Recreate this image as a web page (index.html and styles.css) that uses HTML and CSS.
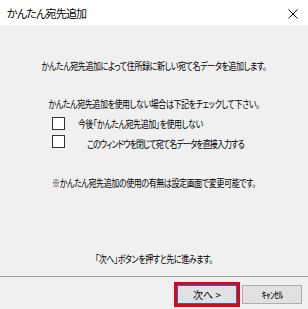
FILE: index.html
```html
<!DOCTYPE html>
<html lang="ja">
<head>
  <meta charset="UTF-8">
  <title>かんたん宛先追加</title>
  <link rel="stylesheet" href="styles.css">
</head>
<body>

  <div class="dialog">
    <div class="titlebar">
      <span class="title">かんたん宛先追加</span>
      <svg class="close" width="10" height="10" viewBox="0 0 10 10">
        <path d="M0.5 0.5 L9.5 9.5 M9.5 0.5 L0.5 9.5" stroke="#111" stroke-width="1" fill="none"/>
      </svg>
    </div>

    <div class="content">
      <p class="msg intro">かんたん宛先追加によって住所録に新しい宛て名データを追加します。</p>
      <p class="msg ask">かんたん宛先追加を使用しない場合は下記をチェックして下さい。</p>

      <label class="check first">
        <span class="box"></span>
        <span class="label">今後「かんたん宛先追加」を使用しない</span>
      </label>
      <label class="check second">
        <span class="box"></span>
        <span class="label">このウィンドウを閉じて宛て名データを直接入力する</span>
      </label>

      <p class="msg note">※かんたん宛先追加の使用の有無は設定画面で変更可能です。</p>
      <p class="msg hint">「次へ」ボタンを押すと先に進みます。</p>
    </div>

    <div class="footer">
      <button class="btn next">次へ &gt;</button>
      <button class="btn cancel">ｷｬﾝｾﾙ</button>
    </div>
  </div>

</body>
</html>
```

FILE: styles.css
```css
body {
  margin: 0;
  background: #f0f0f0;
  font-family: "Noto Sans CJK JP", "Noto Sans", sans-serif;
  color: #000;
}

.dialog {
  width: 308px;
  height: 309px;
  display: flex;
  flex-direction: column;
  background: #f0f0f0;
  overflow: hidden;
}

.titlebar {
  height: 25px;
  background: #fff;
  display: flex;
  align-items: center;
  justify-content: space-between;
  padding: 0 10px 0 7px;
  flex-shrink: 0;
}

.title {
  font-size: 11px;
  letter-spacing: -0.8px;
  font-feature-settings: "palt";
  line-height: 14px;
}

.close {
  margin-top: 2px;
}

.content {
  flex: 1;
  display: flex;
  flex-direction: column;
  font-size: 10px;
  font-feature-settings: "palt";
  letter-spacing: -0.5px;
}

.msg {
  margin: 0;
  line-height: 14px;
  height: 14px;
  text-align: center;
  white-space: nowrap;
  transform: scaleX(0.8);
  flex-shrink: 0;
}

.intro {
  margin-top: 34px;
}

.ask {
  margin-top: 24px;
}

.check {
  display: flex;
  align-items: center;
  height: 13px;
  padding-left: 52px;
  white-space: nowrap;
  flex-shrink: 0;
}

.check.first {
  margin-top: 6px;
}

.check.second {
  margin-top: 5px;
}

.box {
  width: 11px;
  height: 11px;
  border: 1px solid #333;
  background: #fff;
  flex-shrink: 0;
}

.label {
  transform: scaleX(0.8);
  transform-origin: left center;
}

.first .label {
  margin-left: 13px;
}

.second .label {
  margin-left: 22px;
  margin-top: 3px;
  letter-spacing: -1.1px;
}

.note {
  margin-top: 28px;
}

.hint {
  margin-top: 62px;
}

.footer {
  height: 33px;
  flex-shrink: 0;
  border-top: 1px solid #a0a0a0;
  display: flex;
  justify-content: flex-end;
  align-items: flex-start;
  padding: 8px 6px 0 0;
  gap: 5px;
  box-sizing: border-box;
}

.btn {
  width: 60px;
  height: 19px;
  padding: 0;
  margin: 0;
  background: #e1e1e1;
  border: 1px solid #adadad;
  font-family: "Noto Sans CJK JP", sans-serif;
  font-size: 10px;
  color: #000;
  line-height: 16px;
}

.btn.next {
  border-color: #0078d7;
  outline: 3px solid #e60012;
  font-feature-settings: "palt";
}

.btn.cancel {
  letter-spacing: -0.8px;
}
```
